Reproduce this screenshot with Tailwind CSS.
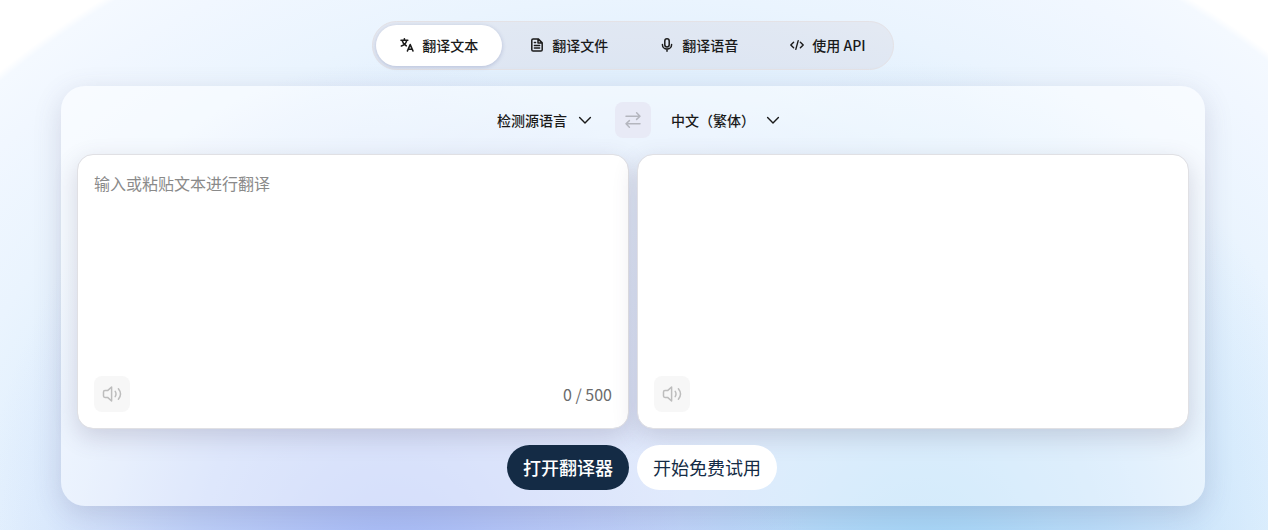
<!DOCTYPE html>
<html lang="zh-CN">
<head>
  <meta charset="UTF-8">
  <meta name="viewport" content="width=device-width, initial-scale=1">
  <title>翻译器</title>
  <script src="https://cdn.jsdelivr.net/npm/@tailwindcss/browser@4"></script>
</head>
<body class="min-h-screen overflow-x-hidden font-['Noto_Sans_CJK_SC',sans-serif] text-[#1a1a1a] bg-white bg-[radial-gradient(420px_540px_at_31%_600px,#a4b8f6_0%,#acbff6b0_35%,#bccaf850_70%,#c4d8fa00_100%),radial-gradient(420px_540px_at_73%_600px,#a0d4f6_0%,#acdaf8b0_35%,#b8defa50_70%,#c8e4fc00_100%),radial-gradient(905px_727px_at_51%_580px,#c8d2f8_0%,#cddffa_50%,#e0effd_67%,#eaf4fe_80%,#f1f7ff_93%,#f4f9ff_99%,#ffffff_100%)] bg-no-repeat">
  <main class="pl-[61px] pr-[63px] pt-[21px] pb-6">

    <!-- 顶部标签 -->
    <nav class="w-fit mx-auto flex gap-1 p-[3px] rounded-full border border-[#e4e2e6] bg-[#c8bec8]/20">
      <button class="h-[41px] px-6 pb-[2px] flex items-center gap-2 rounded-full bg-white text-sm font-medium shadow-[0_1px_4px_rgba(60,70,140,0.25)]">
        <svg class="size-[14px]" viewBox="0 0 14 14" fill="none" stroke="currentColor" stroke-width="1.6" stroke-linecap="round" stroke-linejoin="round"><path d="M1 2.2h6.8M4.4.8v1.4M2.2 2.6c.5 2.3 2.3 4.3 4 5.2M6.7 2.6C6 5.2 3.8 7.2 1.4 8M7.4 13l2.8-6.4L13 13M8.3 11.2h3.8"/></svg>
        翻译文本
      </button>
      <button class="h-[41px] px-6 pb-[2px] flex items-center gap-2 rounded-full text-sm font-medium">
        <svg class="size-[14px]" viewBox="0 0 14 14" fill="none" stroke="currentColor" stroke-width="1.5" stroke-linecap="round" stroke-linejoin="round"><path d="M8.2.9H3.1c-.8 0-1.3.5-1.3 1.3v9.6c0 .8.5 1.3 1.3 1.3h7.8c.8 0 1.3-.5 1.3-1.3V4.9zM8 1v4h4M4.4 4.6h1.2M4.4 7.4h5.2M4.4 10h5.2"/></svg>
        翻译文件
      </button>
      <button class="h-[41px] px-6 pb-[2px] flex items-center gap-2 rounded-full text-sm font-medium">
        <svg class="size-[14px]" viewBox="0 0 14 14" fill="none" stroke="currentColor" stroke-width="1.5" stroke-linecap="round" stroke-linejoin="round"><rect x="4.8" y=".8" width="4.4" height="8.2" rx="2.2"/><path d="M2.4 6.5a4.6 4.6 0 0 0 9.2 0M7 11.2v2"/></svg>
        翻译语音
      </button>
      <button class="h-[41px] px-6 pb-[2px] flex items-center gap-2 rounded-full text-sm font-medium">
        <svg class="size-[14px]" viewBox="0 0 14 14" fill="none" stroke="currentColor" stroke-width="1.4" stroke-linecap="round" stroke-linejoin="round"><path d="M3.6 4.2.8 7l2.8 2.8M10.4 4.2 13.2 7l-2.8 2.8M8.2 2.6 5.8 11.4"/></svg>
        使用 API
      </button>
    </nav>

    <!-- 翻译卡片 -->
    <section class="mt-4 p-4 rounded-3xl bg-white/50 shadow-[0_8px_28px_rgba(80,70,110,0.18)]">
      <div class="grid grid-cols-[1fr_auto_1fr] items-center text-sm font-medium">
        <div class="relative justify-self-end mr-[22px]">
          <select aria-label="源语言" class="appearance-none pr-[26px] outline-none">
            <option>检测源语言</option>
          </select>
          <svg class="absolute right-0 top-1/2 -translate-y-1/2 size-4 pointer-events-none" viewBox="0 0 16 16" fill="none" stroke="currentColor" stroke-width="1.4" stroke-linecap="round" stroke-linejoin="round"><path d="m2.6 5.6 5.4 5.4 5.4-5.4"/></svg>
        </div>
        <button aria-label="交换语言" class="size-9 flex items-center justify-center rounded-lg bg-[#e8eaf6] text-[#b4b6be]">
          <svg class="size-5" viewBox="0 0 20 20" fill="none" stroke="currentColor" stroke-width="1.5" stroke-linecap="round" stroke-linejoin="round"><path d="M3 6.2h14M13.6 2.8 17 6.2l-3.4 3.2M17 13.8H3M6.4 10.6 3 13.8l3.4 3.4"/></svg>
        </button>
        <div class="relative justify-self-start ml-5">
          <select aria-label="目标语言" class="appearance-none pr-[26px] outline-none">
            <option>中文（繁体）</option>
          </select>
          <svg class="absolute right-0 top-1/2 -translate-y-1/2 size-4 pointer-events-none" viewBox="0 0 16 16" fill="none" stroke="currentColor" stroke-width="1.4" stroke-linecap="round" stroke-linejoin="round"><path d="m2.6 5.6 5.4 5.4 5.4-5.4"/></svg>
        </div>
      </div>

      <div class="mt-4 grid grid-cols-2 gap-2">
        <div class="h-[275px] p-4 flex flex-col rounded-2xl border border-[#e0e0e4] bg-white bg-clip-padding shadow-[0_8px_24px_rgba(80,70,100,0.2)]">
          <textarea id="source" aria-label="源文本" maxlength="500" placeholder="输入或粘贴文本进行翻译" class="flex-1 w-full resize-none outline-none text-base placeholder:text-[#8a8a8a]"></textarea>
          <div class="flex items-center justify-between">
            <button aria-label="朗读源文本" class="size-9 flex items-center justify-center rounded-lg bg-[#f7f7f7] text-[#bdbdbd]">
              <svg class="size-5" viewBox="0 0 20 20" fill="none" stroke="currentColor" stroke-width="1.5" stroke-linecap="round" stroke-linejoin="round"><path d="M9.6 3v14L5.6 13.4H3c-.8 0-1.5-.6-1.5-1.4V8c0-.8.7-1.4 1.5-1.4h2.6zM13.2 7.4c1 1.6 1 3.6 0 5.2M16.4 4.8c2.6 3.2 2.6 7.2 0 10.4"/></svg>
            </button>
            <span id="counter" class="text-base text-[#6b6b6b]">0 / 500</span>
          </div>
        </div>
        <div class="h-[275px] p-4 flex flex-col rounded-2xl border border-[#e0e0e4] bg-white bg-clip-padding shadow-[0_8px_24px_rgba(80,70,100,0.2)]">
          <textarea aria-label="译文" readonly class="flex-1 w-full resize-none outline-none text-base"></textarea>
          <div class="flex items-center justify-between">
            <button aria-label="朗读译文" class="size-9 flex items-center justify-center rounded-lg bg-[#f7f7f7] text-[#bdbdbd]">
              <svg class="size-5" viewBox="0 0 20 20" fill="none" stroke="currentColor" stroke-width="1.5" stroke-linecap="round" stroke-linejoin="round"><path d="M9.6 3v14L5.6 13.4H3c-.8 0-1.5-.6-1.5-1.4V8c0-.8.7-1.4 1.5-1.4h2.6zM13.2 7.4c1 1.6 1 3.6 0 5.2M16.4 4.8c2.6 3.2 2.6 7.2 0 10.4"/></svg>
            </button>
          </div>
        </div>
      </div>

      <!-- 操作按钮 -->
      <div class="mt-4 pl-[18px] flex justify-center gap-2 text-lg">
        <a href="#" class="h-[45px] px-4 pb-[2px] flex items-center rounded-full bg-[#142b45] text-white font-medium">打开翻译器</a>
        <a href="#" class="h-[45px] px-4 pb-[2px] flex items-center rounded-full bg-white text-[#142b45]">开始免费试用</a>
      </div>
    </section>
  </main>

  <script>
    const source = document.getElementById("source");
    const counter = document.getElementById("counter");
    source.addEventListener("input", () => {
      counter.textContent = `${source.value.length} / 500`;
    });
  </script>
</body>
</html>
